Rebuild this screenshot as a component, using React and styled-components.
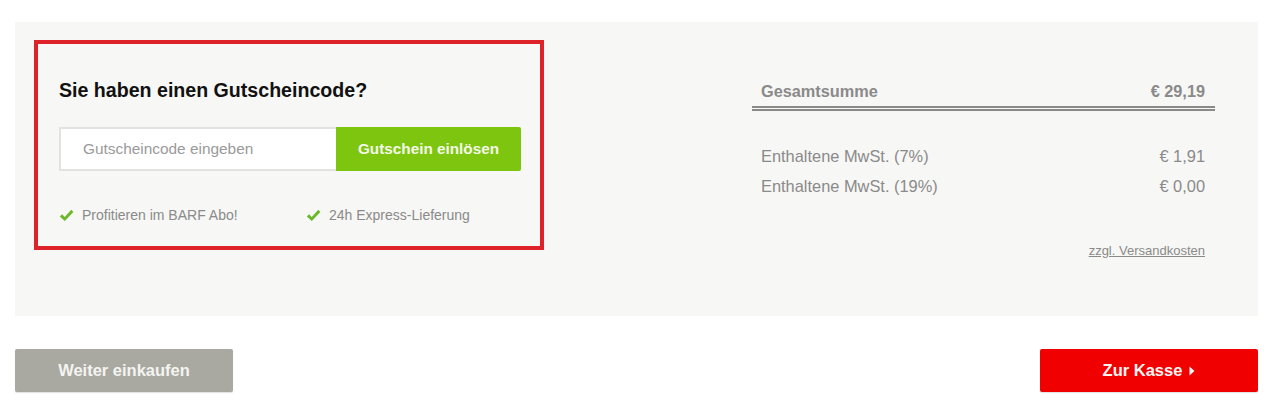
import React from "react";
import styled, { createGlobalStyle } from "styled-components";

const Global = createGlobalStyle`
  html, body { margin: 0; padding: 0; background: #fff; }
  body { font-family: "Liberation Sans", Arial, sans-serif; }
  * { box-sizing: border-box; }
`;

const Page = styled.div`
  padding: 22px 22px 19px 15px;
`;

const Panel = styled.section`
  background: #f7f7f5;
  display: flex;
  justify-content: space-between;
  align-items: flex-start;
  height: 294px;
  padding: 18px 43px 0 19px;
`;

const VoucherBox = styled.div`
  width: 510px;
  border: 4px solid #dd2229;
  padding: 35px 19px 23px 21px;
`;

const Heading = styled.h2`
  margin: 0;
  font-size: 19.6px;
  line-height: 23px;
  font-weight: 700;
  color: #111;
`;

const VoucherForm = styled.div`
  display: flex;
  margin-top: 25px;
  height: 44px;
`;

const Input = styled.input`
  width: 277px;
  flex: none;
  height: 44px;
  border: 2px solid #e2e2e0;
  border-right: none;
  background: #fff;
  padding: 0 0 0 22px;
  font-family: "Liberation Sans", Arial, sans-serif;
  font-size: 15.4px;
  color: #333;
  outline: none;
  &::placeholder { color: #9a9a9a; }
`;

const GreenButton = styled.button`
  width: 185px;
  flex: none;
  height: 44px;
  border: none;
  border-radius: 0 2px 2px 0;
  background: #7dc50e;
  color: #f4f9ea;
  font-family: "Liberation Sans", Arial, sans-serif;
  font-weight: 700;
  font-size: 15.3px;
  cursor: pointer;
`;

const Perks = styled.ul`
  list-style: none;
  margin: 36px 0 0 0;
  padding: 0;
  display: flex;
`;

const Perk = styled.li`
  display: flex;
  align-items: center;
  gap: 8px;
  width: ${p => p.$w || "auto"};
  font-size: 14px;
  line-height: 16px;
  color: #8a8a8a;
`;

const Check = () => (
  <svg width="15" height="13" viewBox="0 0 15 13" aria-hidden="true">
    <path d="M0.8 7.4 L3.1 5.3 L5.7 8 L12.3 0.8 L14.4 2.9 L5.8 12 Z" fill="#6cb82a" />
  </svg>
);

const Summary = styled.div`
  width: 463px;
  margin-top: 41px;
  color: #8a8a8a;
`;

const TotalRow = styled.div`
  display: flex;
  justify-content: space-between;
  padding: 0 10px 4px 9px;
  font-size: 16.3px;
  line-height: 21px;
  font-weight: 700;
  border-bottom: 5px double #8a8a88;
`;

const TaxList = styled.div`
  margin-top: 30px;
`;

const TaxRow = styled.div`
  display: flex;
  justify-content: space-between;
  padding: 0 10px 0 9px;
  font-size: 16.4px;
  line-height: 30px;
`;

const ShippingNote = styled.div`
  display: flex;
  justify-content: flex-end;
  padding-right: 10px;
  margin-top: 42px;
`;

const ShippingLink = styled.a`
  font-size: 13px;
  line-height: 16px;
  color: #8a8a8a;
  text-decoration: underline;
`;

const Actions = styled.div`
  display: flex;
  justify-content: space-between;
  margin-top: 33px;
`;

const ActionButton = styled.button`
  width: 218px;
  height: 43px;
  border: none;
  border-radius: 2px;
  background: ${p => (p.$primary ? "#f10000" : "#a9a9a2")};
  color: ${p => (p.$primary ? "#fff4f4" : "#f4f4f0")};
  font-family: "Liberation Sans", Arial, sans-serif;
  font-weight: 700;
  font-size: 16.5px;
  box-shadow: 0 1px 1px rgba(0, 0, 0, 0.12);
  display: flex;
  align-items: center;
  justify-content: center;
  gap: 7px;
  cursor: pointer;
`;

const Caret = () => (
  <svg width="6" height="10" viewBox="0 0 6 10" aria-hidden="true">
    <path d="M0.5 0.5 L5.5 5 L0.5 9.5 Z" fill="#fff4f4" />
  </svg>
);

export default function App() {
  return (
    <>
      <Global />
      <Page>
        <Panel>
          <VoucherBox>
            <Heading>Sie haben einen Gutscheincode?</Heading>
            <VoucherForm>
              <Input placeholder="Gutscheincode eingeben" />
              <GreenButton>Gutschein einlösen</GreenButton>
            </VoucherForm>
            <Perks>
              <Perk $w="247px"><Check />Profitieren im BARF Abo!</Perk>
              <Perk><Check />24h Express-Lieferung</Perk>
            </Perks>
          </VoucherBox>
          <Summary>
            <TotalRow>
              <span>Gesamtsumme</span>
              <span>€ 29,19</span>
            </TotalRow>
            <TaxList>
              <TaxRow><span>Enthaltene MwSt. (7%)</span><span>€ 1,91</span></TaxRow>
              <TaxRow><span>Enthaltene MwSt. (19%)</span><span>€ 0,00</span></TaxRow>
            </TaxList>
            <ShippingNote>
              <ShippingLink href="#">zzgl. Versandkosten</ShippingLink>
            </ShippingNote>
          </Summary>
        </Panel>
        <Actions>
          <ActionButton>Weiter einkaufen</ActionButton>
          <ActionButton $primary>Zur Kasse<Caret /></ActionButton>
        </Actions>
      </Page>
    </>
  );
}
